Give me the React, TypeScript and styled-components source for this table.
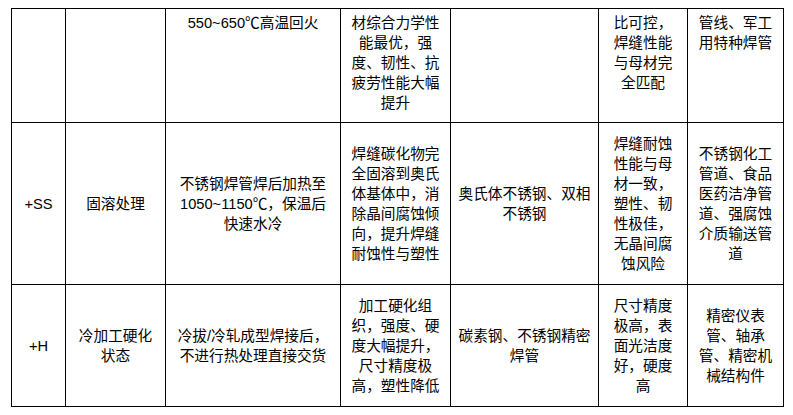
import styled, { createGlobalStyle } from "styled-components"

const GlobalStyle = createGlobalStyle`
  html, body {
    margin: 0;
    padding: 0;
    background: #ffffff;
  }
  body {
    font-family: "Liberation Sans", "Noto Sans CJK SC", sans-serif;
    color: #000000;
  }
`

const Page = styled.div`
  padding: 8px 0 0 11px;
`

const Table = styled.table`
  border-collapse: collapse;
  table-layout: fixed;
  width: 772px;
  font-size: 14.67px;
  line-height: 20px;
`

const Row = styled.tr<{ $height: number }>`
  height: ${({ $height }) => $height}px;
`

const Cell = styled.td<{ $clipped?: boolean }>`
  border: 1px solid #000000;
  padding: ${({ $clipped }) => ($clipped ? "4px 2px 0" : "0 2px")};
  text-align: center;
  vertical-align: ${({ $clipped }) => ($clipped ? "top" : "middle")};
  white-space: nowrap;
  overflow: hidden;
`

const Line = styled.div``

const widths = [54, 100, 175, 110, 148, 89, 96]

type RowData = { height: number; clipped?: boolean; cells: string[][] }

// first row is the tail of a row cut off above the visible area
const rows: RowData[] = [
  {
    height: 114,
    clipped: true,
    cells: [
      [],
      [],
      ["550~650℃高温回火"],
      ["材综合力学性", "能最优，强", "度、韧性、抗", "疲劳性能大幅", "提升"],
      [],
      ["比可控，", "焊缝性能", "与母材完", "全匹配"],
      ["管线、军工", "用特种焊管"],
    ],
  },
  {
    height: 162,
    cells: [
      ["+SS"],
      ["固溶处理"],
      ["不锈钢焊管焊后加热至", "1050~1150℃，保温后", "快速水冷"],
      ["焊缝碳化物完", "全固溶到奥氏", "体基体中，消", "除晶间腐蚀倾", "向，提升焊缝", "耐蚀性与塑性"],
      ["奥氏体不锈钢、双相", "不锈钢"],
      ["焊缝耐蚀", "性能与母", "材一致，", "塑性、韧", "性极佳，", "无晶间腐", "蚀风险"],
      ["不锈钢化工", "管道、食品", "医药洁净管", "道、强腐蚀", "介质输送管", "道"],
    ],
  },
  {
    height: 122,
    cells: [
      ["+H"],
      ["冷加工硬化", "状态"],
      ["冷拔/冷轧成型焊接后，", "不进行热处理直接交货"],
      ["加工硬化组", "织，强度、硬", "度大幅提升，", "尺寸精度极", "高，塑性降低"],
      ["碳素钢、不锈钢精密", "焊管"],
      ["尺寸精度", "极高，表", "面光洁度", "好，硬度", "高"],
      ["精密仪表", "管、轴承", "管、精密机", "械结构件"],
    ],
  },
]

export default function App() {
  return (
    <>
      <GlobalStyle />
      <Page>
        <Table>
          <colgroup>
            {widths.map((w, i) => (
              <col key={i} style={{ width: w }} />
            ))}
          </colgroup>
          <tbody>
            {rows.map((row, r) => (
              <Row key={r} $height={row.height}>
                {row.cells.map((lines, c) => (
                  <Cell key={c} $clipped={row.clipped}>
                    {lines.map((l, k) => (
                      <Line key={k}>{l}</Line>
                    ))}
                  </Cell>
                ))}
              </Row>
            ))}
          </tbody>
        </Table>
      </Page>
    </>
  )
}
